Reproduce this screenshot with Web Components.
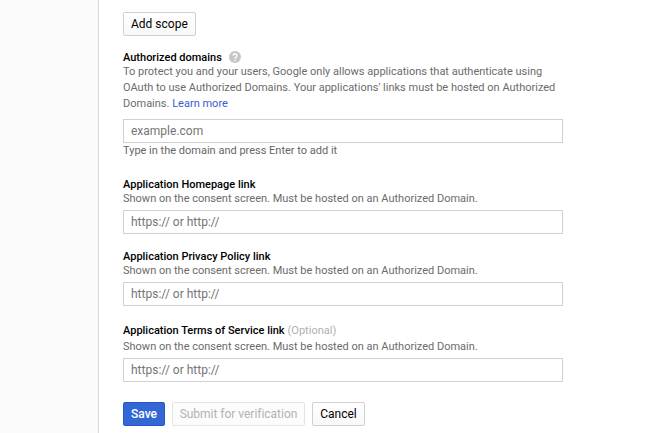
<!DOCTYPE html>
<html lang="en">
<head>
<meta charset="utf-8">
<title>OAuth consent screen</title>
<style>
html,body{margin:0;height:433px;overflow:hidden;background:#fff}
body{font-family:Roboto,"Liberation Sans",sans-serif}
</style>
</head>
<body>
<consent-page>
  <push-button>Add scope</push-button>
  <form-field class="domains" placeholder="example.com">
    <span slot="label">Authorized domains</span>
    <help-icon slot="extra"></help-icon>
    <span slot="description">To protect you and your users, Google only allows applications that authenticate using<br>OAuth to use Authorized Domains. Your applications' links must be hosted on Authorized<br>Domains. <text-link>Learn more</text-link></span>
    <span slot="hint">Type in the domain and press Enter to add it</span>
  </form-field>
  <form-field class="home" placeholder="https:// or http://">
    <span slot="label">Application Homepage link</span>
    <span slot="description">Shown on the consent screen. Must be hosted on an Authorized Domain.</span>
  </form-field>
  <form-field class="privacy" placeholder="https:// or http://">
    <span slot="label">Application Privacy Policy link</span>
    <span slot="description">Shown on the consent screen. Must be hosted on an Authorized Domain.</span>
  </form-field>
  <form-field class="terms" placeholder="https:// or http://">
    <span slot="label">Application Terms of Service link</span>
    <span slot="extra">(Optional)</span>
    <span slot="description">Shown on the consent screen. Must be hosted on an Authorized Domain.</span>
  </form-field>
  <button-row>
    <push-button kind="primary">Save</push-button>
    <push-button kind="disabled">Submit for verification</push-button>
    <push-button class="cancel">Cancel</push-button>
  </button-row>
</consent-page>
<script>
function define(name, html, setup) {
  const t = document.createElement('template');
  t.innerHTML = html;
  customElements.define(name, class extends HTMLElement {
    constructor() {
      super();
      this.attachShadow({mode: 'open'}).append(t.content.cloneNode(true));
    }
    connectedCallback() { if (setup) setup(this); }
  });
}

define('consent-page', `
<style>
:host{display:flex;height:433px}
aside{flex:none;box-sizing:border-box;width:99px;background:#fafafa;border-right:1px solid #d9d9d9}
main{display:flex;flex-direction:column;align-items:flex-start;padding:12px 0 0 24px;width:440px}
::slotted(.domains){margin-top:14px;--desc-line:16px;--desc-gap:7px}
::slotted(.home){margin-top:19px;--label-gap:1px;--desc-gap:4px}
::slotted(.privacy){margin-top:15px;--label-gap:1px;--desc-gap:4px}
::slotted(.terms){margin-top:17px;--label-gap:2px;--desc-line:16px;--desc-gap:3px}
::slotted(button-row){margin-top:20px}
</style>
<aside></aside><main><slot></slot></main>`);

define('push-button', `
<style>
:host{display:block;flex:none}
button{display:block;box-sizing:border-box;width:100%;height:24px;margin:0;padding:0 7px;border:1px solid #d0d0d0;border-radius:2px;background:linear-gradient(#fff,#f8f8f8);color:#000;font:400 12px/22px Roboto,"Liberation Sans",sans-serif;white-space:nowrap}
:host([kind=primary]) button{border-color:#2558c5;background:#3367d6;color:#fff;font-weight:500}
:host([kind=disabled]) button{padding:0 6px;border-color:#e3e3e3;background:#fcfcfc;color:#b2b2b2;letter-spacing:-.02px}
</style>
<button type="button"><slot></slot></button>`, el => {
  if (el.getAttribute('kind') === 'disabled') el.shadowRoot.querySelector('button').disabled = true;
});

define('button-row', `
<style>:host{display:flex;gap:7px}::slotted([kind=primary]){width:42px}::slotted([kind=disabled]){width:133px}::slotted(.cancel){width:53px}</style><slot></slot>`);

define('help-icon', `
<style>:host{display:block;width:12px;height:12px;margin:1px 0 0 4px}svg{display:block}</style>
<svg width="12" height="12" viewBox="0 0 12 12"><circle cx="6" cy="6" r="6" fill="#c6c6c6"/><path d="M4.1 4.7a1.9 1.9 0 1 1 3.1 1.45C6.4 6.8 6 7 6 7.8" fill="none" stroke="#fff" stroke-width="1.3"/><rect x="5.35" y="8.6" width="1.3" height="1.3" fill="#fff"/></svg>`);

define('text-link', `
<style>:host{display:inline;color:#3b5bd0}</style><slot></slot>`);

define('form-field', `
<style>
:host{display:block;width:440px;font-size:11px;white-space:nowrap}
.head{display:flex;align-items:flex-start;gap:3px;height:14px;line-height:16px;color:#b0b0b0}
.label{color:#000;font-weight:500}
.desc{margin-top:var(--label-gap,0px);line-height:var(--desc-line,14px);color:#6b6b6b}
.box{box-sizing:border-box;height:24px;margin-top:var(--desc-gap,5px);padding:0 7px;border:1px solid #d0d0d0;background:#fff;color:#757575;font-size:12px;line-height:22px}
.hint{line-height:15px;color:#666}
</style>
<div class="head"><span class="label"><slot name="label"></slot></span><slot name="extra"></slot></div>
<div class="desc"><slot name="description"></slot></div>
<div class="box" role="textbox"></div>
<div class="hint"><slot name="hint"></slot></div>`, el => {
  el.shadowRoot.querySelector('.box').textContent = el.getAttribute('placeholder');
});
</script>
</body>
</html>
